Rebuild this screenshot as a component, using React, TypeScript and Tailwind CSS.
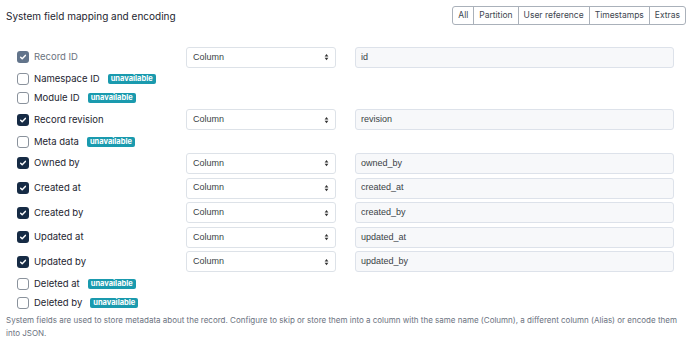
import React from "react";

type Field = {
  label: string;
  checked: boolean;
  value?: string;
  unavailable?: boolean;
  locked?: boolean;
};

const fields: Field[] = [
  { label: "Record ID", checked: true, value: "id", locked: true },
  { label: "Namespace ID", checked: false, unavailable: true },
  { label: "Module ID", checked: false, unavailable: true },
  { label: "Record revision", checked: true, value: "revision" },
  { label: "Meta data", checked: false, unavailable: true },
  { label: "Owned by", checked: true, value: "owned_by" },
  { label: "Created at", checked: true, value: "created_at" },
  { label: "Created by", checked: true, value: "created_by" },
  { label: "Updated at", checked: true, value: "updated_at" },
  { label: "Updated by", checked: true, value: "updated_by" },
  { label: "Deleted at", checked: false, unavailable: true },
  { label: "Deleted by", checked: false, unavailable: true },
];

const presets = ["All", "Partition", "User reference", "Timestamps", "Extras"];

function Checkbox({ checked, locked }: { checked: boolean; locked?: boolean }) {
  if (!checked) {
    return <span className="h-[12px] w-[12px] shrink-0 rounded-[3px] border border-[#8a929c] bg-white" />;
  }
  return (
    <span
      className={`flex h-[12px] w-[12px] shrink-0 items-center justify-center rounded-[3px] ${
        locked ? "bg-[#62748b]" : "bg-[#162b45]"
      }`}
    >
      <svg viewBox="0 0 12 12" className="h-[8px] w-[8px]" fill="none" stroke="white" strokeWidth="2.2">
        <path d="M2.5 6.3l2.3 2.3 4.7-5" strokeLinecap="round" strokeLinejoin="round" />
      </svg>
    </span>
  );
}

function SortArrows() {
  return (
    <svg viewBox="0 0 8 12" className="h-[8px] w-[5px]" fill="#333">
      <path d="M4 1l3 4H1z" />
      <path d="M4 11l3-4H1z" />
    </svg>
  );
}

export default function App() {
  return (
    <div className="w-[689px] h-[340px] bg-white px-[6px] pt-[6px] font-['Inter',sans-serif] text-[#1d2530]">
      <div className="flex items-start justify-between">
        <h2 className="mt-[4px] text-[10px] leading-[13px]">System field mapping and encoding</h2>
        <div className="-mr-[3px] flex rounded-[3px] border border-[#aab1ba] text-[8.5px] text-[#3d4650]">
          {presets.map((p, i) => (
            <span
              key={p}
              className={`px-[5px] py-[3px] leading-[11px] ${i > 0 ? "border-l border-[#aab1ba]" : ""}`}
            >
              {p}
            </span>
          ))}
        </div>
      </div>

      <div className="mt-[20px] pl-[11px]">
        {fields.map((f) => (
          <div key={f.label} className={`flex items-center ${f.value ? "h-[24.6px]" : "h-[19px]"}`}>
            <div className="flex w-[169px] items-center gap-[5px]">
              <Checkbox checked={f.checked} locked={f.locked} />
              <span className={`text-[9.5px] ${f.locked ? "text-[#6b7480]" : ""}`}>{f.label}</span>
              {f.unavailable && (
                <span className="ml-[3px] rounded-[2px] bg-[#1a9aae] px-[3px] text-[7.5px] font-bold leading-[10px] text-white">
                  unavailable
                </span>
              )}
            </div>
            {f.value && (
              <>
                <div className="flex h-[21px] w-[150px] items-center justify-between rounded-[3px] border border-[#dde2e8] bg-white px-[6px] font-['Liberation_Sans',sans-serif] text-[9px] text-[#3a3f45]">
                  <span>Column</span>
                  <SortArrows />
                </div>
                <div className="ml-[19px] flex h-[21px] w-[319px] items-center rounded-[3px] border border-[#dde2ea] bg-[#f7f8fa] px-[5px] font-['Liberation_Sans',sans-serif] text-[9px] text-[#3a3f45]">
                  {f.value}
                </div>
              </>
            )}
          </div>
        ))}
      </div>

      <p className="mt-[2px] text-[8px] leading-[13px] text-[#6b7280]">
        System fields are used to store metadata about the record. Configure to skip or store them into a column with the same name (Column), a different column (Alias) or encode them into JSON.
      </p>
    </div>
  );
}
